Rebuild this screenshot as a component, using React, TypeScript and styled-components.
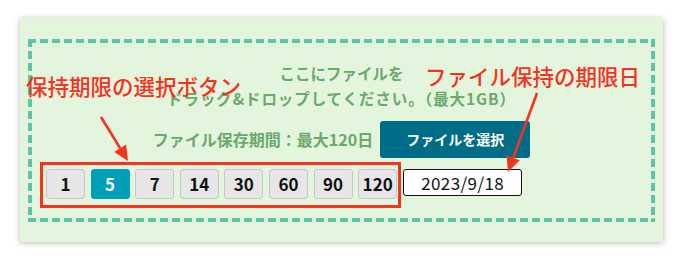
import styled, { createGlobalStyle } from 'styled-components';

const GlobalStyle = createGlobalStyle`
  body {
    margin: 0;
    background: #ffffff;
    font-family: "Noto Sans CJK JP", "Noto Sans", sans-serif;
  }
`;

const dash = '#5ec4a8';

const Page = styled.div`
  position: relative;
  width: 680px;
  height: 260px;
  padding: 18px 0 0 20px;
  box-sizing: border-box;
`;

const Panel = styled.div`
  width: 643px;
  height: 224px;
  box-sizing: border-box;
  padding: 21px 8px 20px;
  background: #e3f5dd;
  box-shadow: 0 1px 6px rgba(0, 0, 0, 0.28);
`;

// dashes drawn as gradients: 8px dash, 4px gap, 4px thick
const DropZone = styled.div`
  height: 100%;
  box-sizing: border-box;
  padding: 4px;
  background:
    repeating-linear-gradient(90deg, ${dash} 0 8px, transparent 8px 12px) top left / 100% 4px no-repeat,
    repeating-linear-gradient(90deg, ${dash} 0 8px, transparent 8px 12px) bottom left / 100% 4px no-repeat,
    repeating-linear-gradient(180deg, ${dash} 0 8px, transparent 8px 12px) top left / 4px 100% no-repeat,
    repeating-linear-gradient(180deg, ${dash} 0 8px, transparent 8px 12px) top right / 4px 100% no-repeat;
  display: flex;
  flex-direction: column;
`;

const Message = styled.p`
  margin: 17.5px 0 0;
  text-align: center;
  font-size: 15.5px;
  line-height: 25px;
  font-weight: 700;
  color: #6da86d;
`;

const Line = styled.span<{ $spacing?: number }>`
  display: block;
  letter-spacing: ${(p) => p.$spacing ?? 0}px;
`;

const SelectRow = styled.div`
  margin-top: 10px;
  display: flex;
  justify-content: center;
  align-items: center;
  gap: 7px;
`;

const Limit = styled.span`
  font-size: 16px;
  font-weight: 700;
  color: #6da86d;
`;

const FileButton = styled.button`
  width: 150px;
  height: 37px;
  border: none;
  border-radius: 3px;
  background: #006d88;
  color: #ffffff;
  font-family: inherit;
  font-size: 14px;
  font-weight: 700;
`;

const PeriodRow = styled.div`
  margin-top: 4px;
  padding-left: 8px;
  display: flex;
  align-items: flex-start;
  gap: 2px;
`;

const DayGroup = styled.div`
  display: flex;
  gap: 5.6px;
  padding: 4px 1px 6px 3px;
  border: 3px solid #f7321f;
`;

const DayButton = styled.button<{ $active?: boolean }>`
  width: 39px;
  height: 30px;
  padding: 0;
  box-sizing: border-box;
  border: 1px solid ${(p) => (p.$active ? '#00a1b8' : '#c8c8c8')};
  border-radius: 3px;
  background: ${(p) => (p.$active ? '#00a1b8' : '#e6e6e6')};
  color: ${(p) => (p.$active ? '#ffffff' : '#111111')};
  font-family: inherit;
  font-size: 17px;
  font-weight: 700;
`;

const DateBox = styled.div`
  margin-top: 7px;
  width: 119px;
  height: 27px;
  box-sizing: border-box;
  border: 1px solid #111111;
  border-radius: 3px;
  background: #ffffff;
  display: flex;
  align-items: center;
  justify-content: center;
  font-size: 17px;
  letter-spacing: 0.4px;
  color: #111111;
`;

const Note = styled.span<{ $left: number; $top: number }>`
  position: absolute;
  left: ${(p) => p.$left}px;
  top: ${(p) => p.$top}px;
  font-size: 21.5px;
  line-height: 1;
  font-weight: 500;
  color: #f7321f;
  white-space: nowrap;
`;

const Arrows = styled.svg`
  position: absolute;
  left: 0;
  top: 0;
  pointer-events: none;
`;

const days = [1, 5, 7, 14, 30, 60, 90, 120];

function Arrow({ x1, y1, x2, y2 }: { x1: number; y1: number; x2: number; y2: number }) {
  const a = Math.atan2(y2 - y1, x2 - x1);
  const len = 15;
  const w = 7;
  const bx = x2 - len * Math.cos(a);
  const by = y2 - len * Math.sin(a);
  const px = -Math.sin(a) * w;
  const py = Math.cos(a) * w;
  return (
    <g>
      <line x1={x1} y1={y1} x2={bx} y2={by} stroke="#f7321f" strokeWidth={2.6} />
      <polygon points={`${x2},${y2} ${bx + px},${by + py} ${bx - px},${by - py}`} fill="#f7321f" />
    </g>
  );
}

export default function App() {
  return (
    <Page>
      <GlobalStyle />
      <Panel>
        <DropZone>
          <Message>
            <Line>ここにファイルを</Line>
            <Line $spacing={0.9}>ドラッグ&amp;ドロップしてください。（最大1GB）</Line>
          </Message>
          <SelectRow>
            <Limit>ファイル保存期間：最大120日</Limit>
            <FileButton>ファイルを選択</FileButton>
          </SelectRow>
          <PeriodRow>
            <DayGroup>
              {days.map((d) => (
                <DayButton key={d} $active={d === 5}>
                  {d}
                </DayButton>
              ))}
            </DayGroup>
            <DateBox>2023/9/18</DateBox>
          </PeriodRow>
        </DropZone>
      </Panel>
      <Note $left={26} $top={75}>保持期限の選択ボタン</Note>
      <Note $left={425} $top={65}>ファイル保持の期限日</Note>
      <Arrows width={680} height={260} viewBox="0 0 680 260">
        <Arrow x1={101} y1={117} x2={128} y2={161} />
        <Arrow x1={537} y1={93} x2={508} y2={172} />
      </Arrows>
    </Page>
  );
}
